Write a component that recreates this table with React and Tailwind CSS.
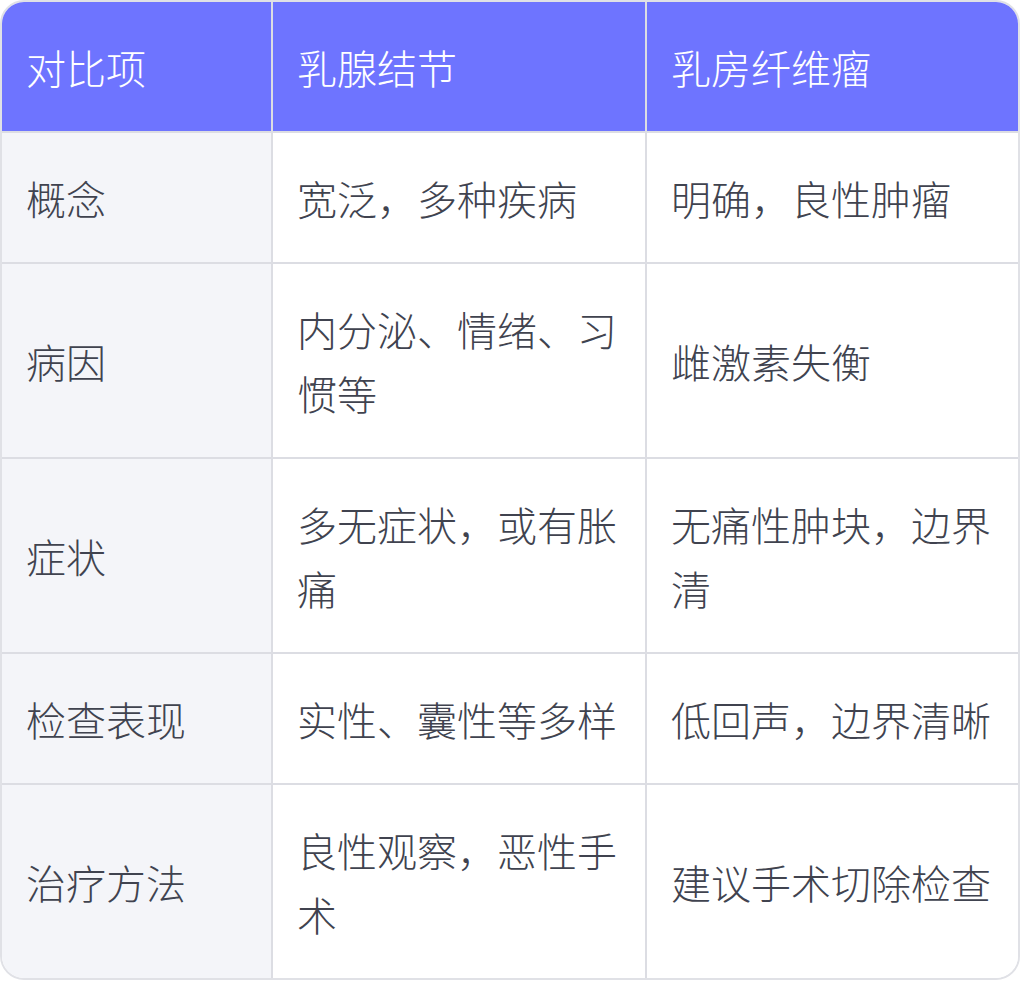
import React from 'react';

const rows = [
  ['概念', '宽泛，多种疾病', '明确，良性肿瘤'],
  ['病因', '内分泌、情绪、习惯等', '雌激素失衡'],
  ['症状', '多无症状，或有胀痛', '无痛性肿块，边界清'],
  ['检查表现', '实性、囊性等多样', '低回声，边界清晰'],
  ['治疗方法', '良性观察，恶性手术', '建议手术切除检查'],
];

const App = () => {
  return (
    <div
      className="w-[1020px] bg-white"
      style={{ fontFamily: '"Noto Sans CJK SC", "Noto Sans", sans-serif' }}
    >
      <div className="rounded-[24px] border-2 border-[#e0e1e6] overflow-hidden">
        <div className="grid grid-cols-[271px_374px_1fr] text-[40px] leading-[64px] font-light">
          {/* 表头 */}
          <div className="bg-[#6e74ff] text-white px-[24px] pt-[33px] pb-[32px] border-r-2 border-b-2 border-[#dcdde3]">对比项</div>
          <div className="bg-[#6e74ff] text-white px-[24px] pt-[33px] pb-[32px] border-r-2 border-b-2 border-[#dcdde3]">乳腺结节</div>
          <div className="bg-[#6e74ff] text-white px-[24px] pt-[33px] pb-[32px] border-b-2 border-[#dcdde3]">乳房纤维瘤</div>

          {rows.map((row, i) => {
            const last = i === rows.length - 1;
            return (
              <React.Fragment key={row[0]}>
                <div className={`bg-[#f4f5f9] text-[#40434f] px-[24px] pt-[33px] pb-[32px] border-r-2 border-[#dcdde3] flex items-center ${last ? '' : 'border-b-2'}`}>
                  {row[0]}
                </div>
                <div className={`bg-white text-[#40434f] px-[24px] pt-[33px] pb-[32px] border-r-2 border-[#dcdde3] flex items-center ${last ? '' : 'border-b-2'}`}>
                  {row[1]}
                </div>
                <div className={`bg-white text-[#40434f] px-[24px] pt-[33px] pb-[32px] border-[#dcdde3] flex items-center ${last ? '' : 'border-b-2'}`}>
                  {row[2]}
                </div>
              </React.Fragment>
            );
          })}
        </div>
      </div>
    </div>
  );
};

export default App;
